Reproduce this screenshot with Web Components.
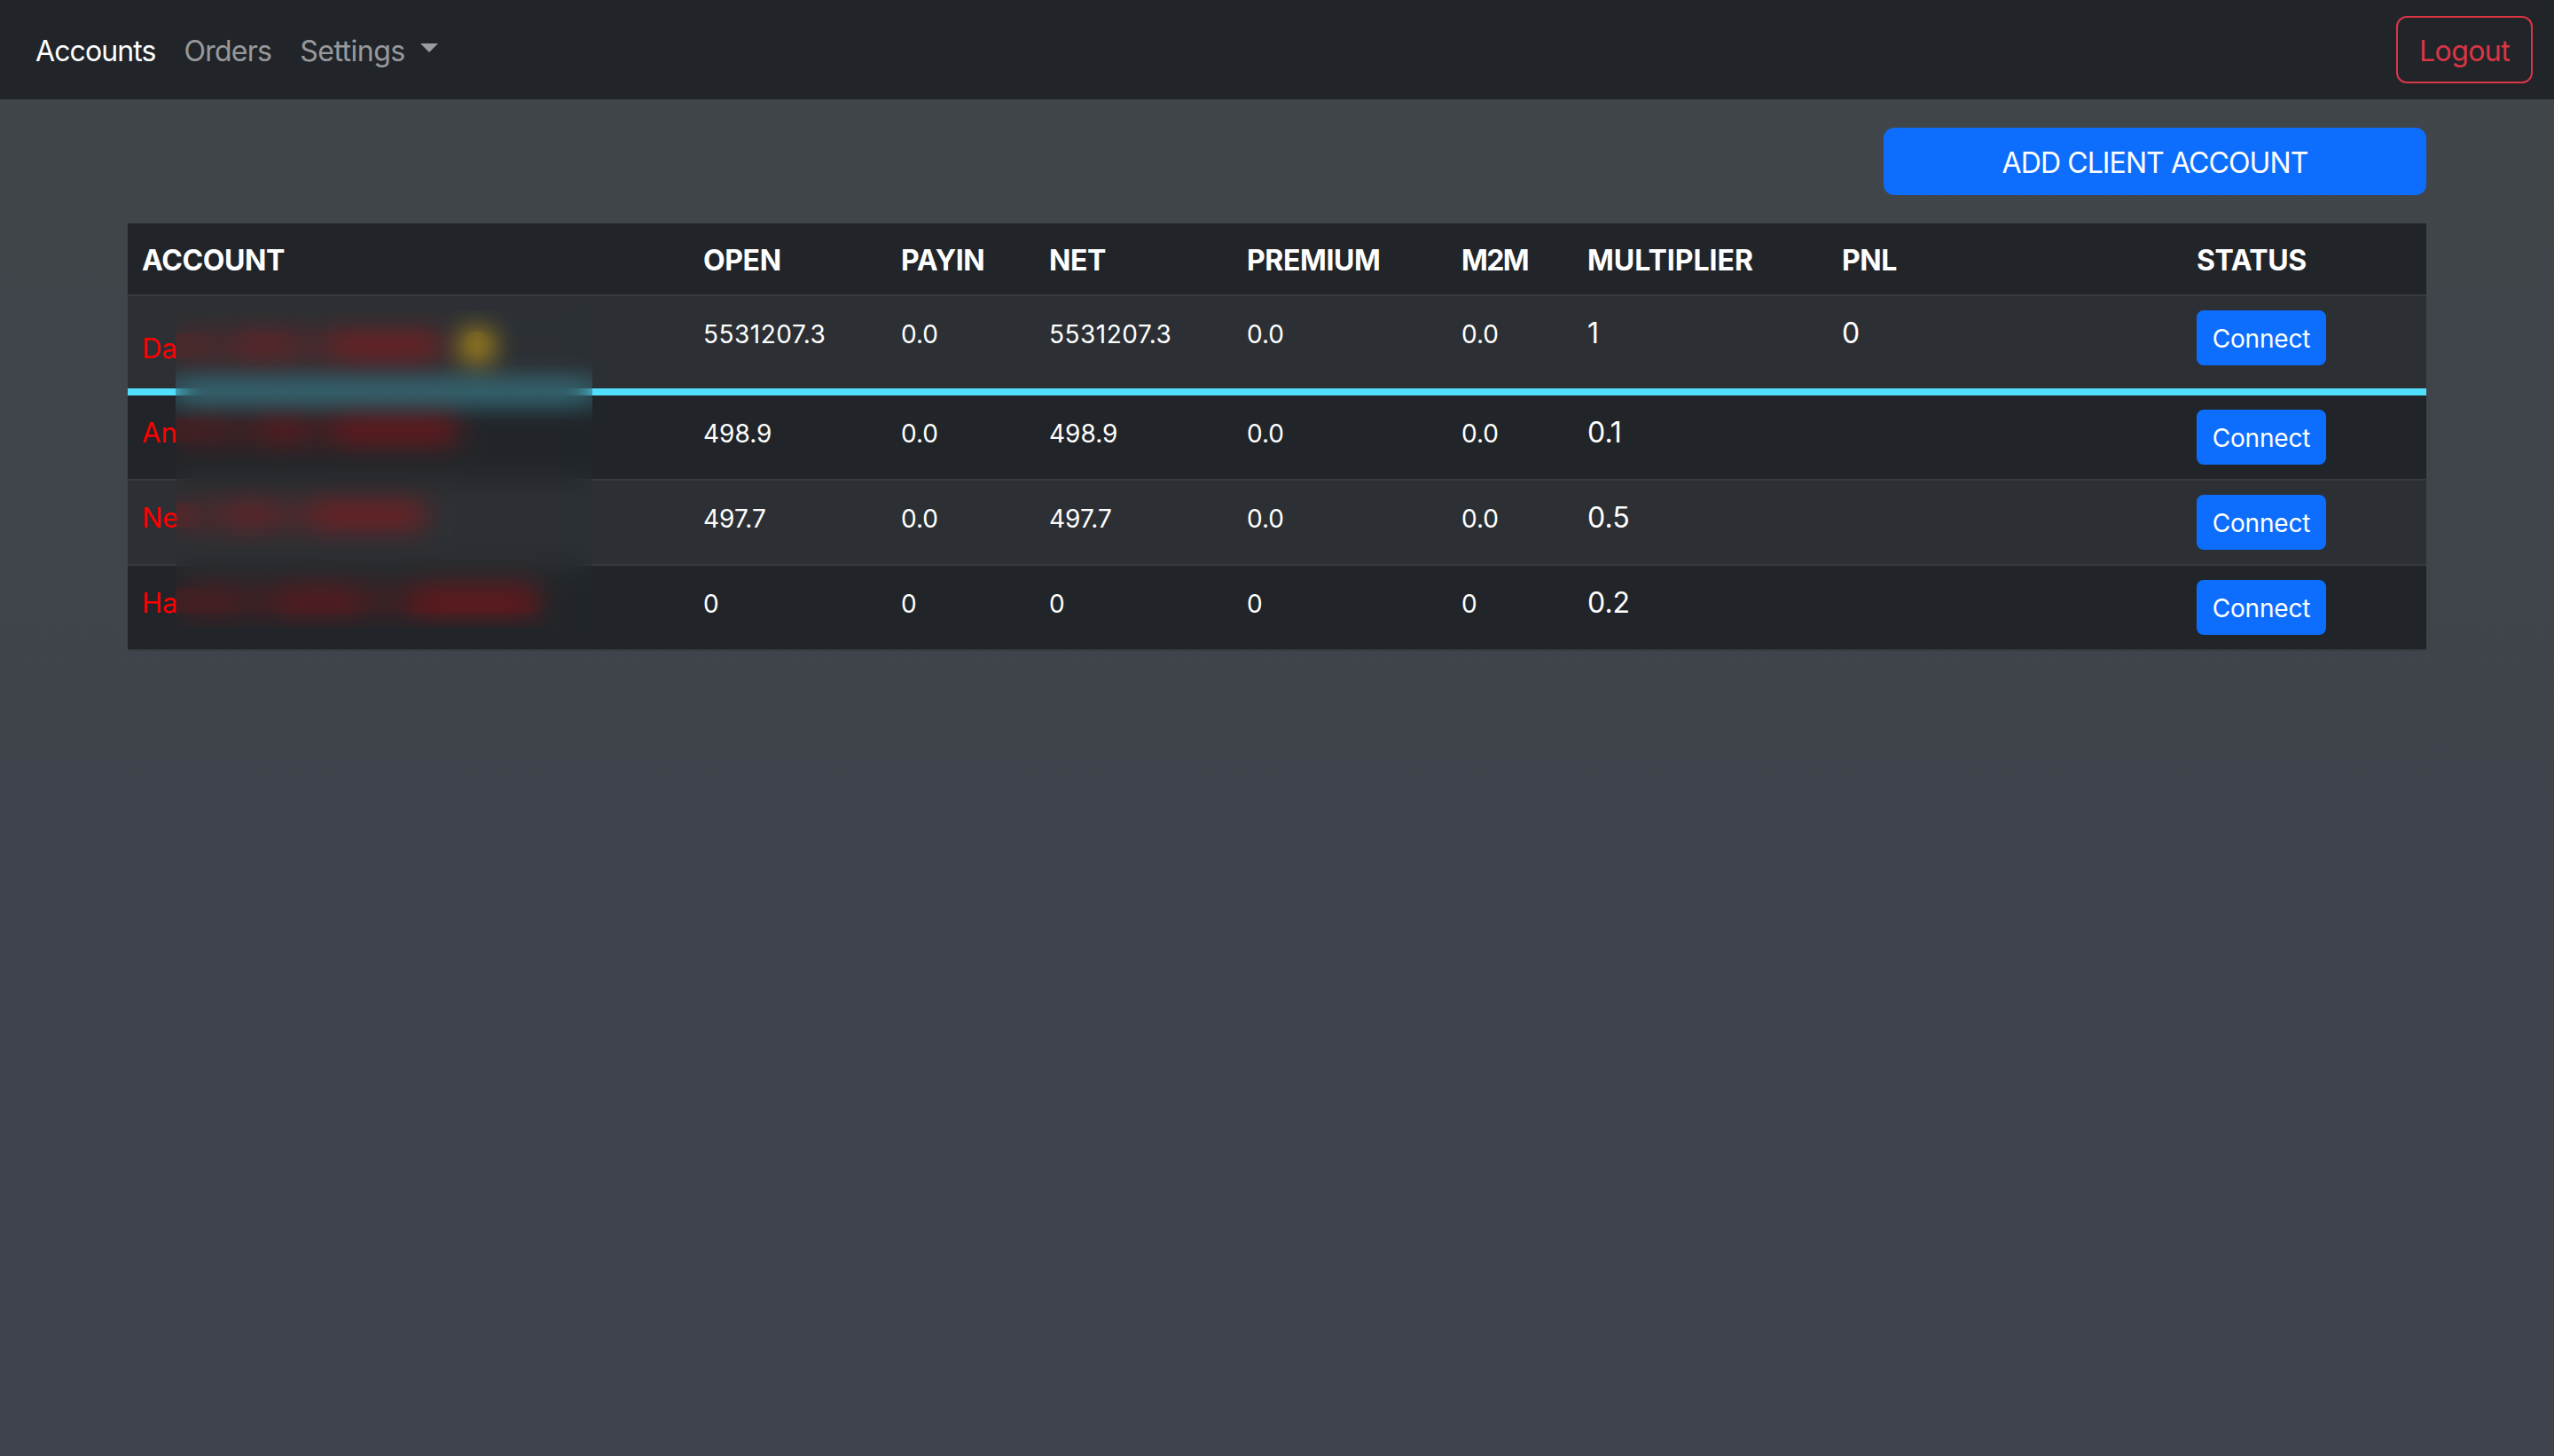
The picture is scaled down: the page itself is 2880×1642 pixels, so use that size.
<!DOCTYPE html>
<html lang="en">
<head>
<meta charset="utf-8">
<title>Accounts</title>
<style>
  html, body { margin: 0; padding: 0; }
  body {
    min-height: 100vh;
    background: linear-gradient(180deg, #41464a 0, #3f434b 900px);
    color: #fff;
    font: 400 32px/48px Inter, "Liberation Sans", sans-serif;
  }
</style>
</head>
<body>
<app-navbar>
  <nav-link active style="letter-spacing:-.9px">Accounts</nav-link>
  <nav-link>Orders</nav-link>
  <nav-link caret style="letter-spacing:-.5px">Settings</nav-link>
  <app-button slot="end" variant="outline-danger">Logout</app-button>
</app-navbar>

<accounts-page>
  <app-button slot="actions" variant="primary" wide>ADD CLIENT ACCOUNT</app-button>
  <accounts-table>
    <table-row header>
      <table-cell>ACCOUNT</table-cell>
      <table-cell>OPEN</table-cell>
      <table-cell>PAYIN</table-cell>
      <table-cell>NET</table-cell>
      <table-cell>PREMIUM</table-cell>
      <table-cell style="letter-spacing:-1.6px">M2M</table-cell>
      <table-cell style="letter-spacing:0">MULTIPLIER</table-cell>
      <table-cell>PNL</table-cell>
      <table-cell>STATUS</table-cell>
    </table-row>
    <table-row striped accent>
      <table-cell><account-name bars="212-235,268-332,373-497" dot lowered>Da</account-name></table-cell>
      <table-cell small style="letter-spacing:.5px">5531207.3</table-cell>
      <table-cell small>0.0</table-cell>
      <table-cell small style="letter-spacing:.5px">5531207.3</table-cell>
      <table-cell small>0.0</table-cell>
      <table-cell small>0.0</table-cell>
      <table-cell>1</table-cell>
      <table-cell>0</table-cell>
      <table-cell flush><app-button variant="primary" size="sm">Connect</app-button></table-cell>
    </table-row>
    <table-row>
      <table-cell><account-name bars="212-250,295-345,378-515">An</account-name></table-cell>
      <table-cell small>498.9</table-cell>
      <table-cell small>0.0</table-cell>
      <table-cell small>498.9</table-cell>
      <table-cell small>0.0</table-cell>
      <table-cell small>0.0</table-cell>
      <table-cell>0.1</table-cell>
      <table-cell></table-cell>
      <table-cell flush><app-button variant="primary" size="sm">Connect</app-button></table-cell>
    </table-row>
    <table-row striped>
      <table-cell><account-name bars="203-222,254-314,350-479">Ne</account-name></table-cell>
      <table-cell small>497.7</table-cell>
      <table-cell small>0.0</table-cell>
      <table-cell small>497.7</table-cell>
      <table-cell small>0.0</table-cell>
      <table-cell small>0.0</table-cell>
      <table-cell>0.5</table-cell>
      <table-cell></table-cell>
      <table-cell flush><app-button variant="primary" size="sm">Connect</app-button></table-cell>
    </table-row>
    <table-row>
      <table-cell><account-name bars="212-268,314-405,465-607">Ha</account-name></table-cell>
      <table-cell small>0</table-cell>
      <table-cell small>0</table-cell>
      <table-cell small>0</table-cell>
      <table-cell small>0</table-cell>
      <table-cell small>0</table-cell>
      <table-cell>0.2</table-cell>
      <table-cell></table-cell>
      <table-cell flush><app-button variant="primary" size="sm">Connect</app-button></table-cell>
    </table-row>
  </accounts-table>
</accounts-page>

<script>
// Small helper: every element here just stamps some markup in an open shadow root.
class Base extends HTMLElement {
  constructor(html) {
    super();
    this.attachShadow({ mode: 'open' });
    this.shadowRoot.innerHTML = html;
  }
}

class AppNavbar extends Base {
  constructor() {
    super(`
      <style>
        :host { display: flex; align-items: center; justify-content: space-between;
                height: 112px; padding: 0 24px; box-sizing: border-box; background: #212529; }
        .links { display: flex; }
      </style>
      <div class="links"><slot></slot></div>
      <slot name="end"></slot>`);
  }
}

class NavLink extends Base {
  constructor() {
    super(`
      <style>
        :host { display: flex; align-items: center; padding: 10px 16px 6px; color: rgba(255,255,255,.55);
                letter-spacing: -.75px; }
        :host([active]) { color: #fff; }
        .caret { display: none; margin-left: 17px; margin-bottom: 8px; width: 0; height: 0;
                 border-top: 10px solid currentColor; border-left: 10px solid transparent;
                 border-right: 10px solid transparent; }
        :host([caret]) .caret { display: block; }
      </style>
      <slot></slot><span class="caret"></span>`);
  }
}

class AppButton extends Base {
  constructor() {
    super(`
      <style>
        :host { display: inline-flex; align-items: center; justify-content: center; box-sizing: border-box;
                height: 76px; padding: 3px 24px 0; border: 2px solid transparent; border-radius: 12px;
                white-space: nowrap; }
        :host([variant="primary"]) { background: #0d6efd; border-color: #0d6efd; color: #fff; }
        :host([variant="outline-danger"]) { color: #dc3545; border-color: #dc3545; letter-spacing: -.6px; }
        :host([size="sm"]) { height: 62px; width: 146px; padding: 1px 0 0; font-size: 28px; line-height: 42px;
                             border-radius: 8px; letter-spacing: -.2px; }
        :host([wide]) { width: 612px; letter-spacing: -.9px; }
      </style>
      <slot></slot>`);
  }
}

class AccountsPage extends Base {
  constructor() {
    super(`
      <style>
        :host { display: block; width: 2592px; margin: 0 auto; padding-top: 32px; }
        .actions { display: flex; justify-content: flex-end; margin-bottom: 32px; }
      </style>
      <div class="actions"><slot name="actions"></slot></div>
      <slot></slot>`);
  }
}

// The account names are redacted in the source picture, so a blur panel lies over that column.
// The panel is drawn 60px bigger on each side and clipped back, which keeps the
// backdrop blur even right up to its hard edges. The glow tops up the smeared cyan line.
class AccountsTable extends Base {
  constructor() {
    super(`
      <style>
        :host { display: block; position: relative; background: #212529; }
        .blur { position: absolute; left: -6px; top: 38px; width: 590px; height: 478px;
                backdrop-filter: blur(16px); clip-path: inset(60px); }
        .glow { margin-top: 120px; height: 66px;
                background: linear-gradient(180deg, rgba(80,223,253,0), rgba(80,223,253,.1) 50%, rgba(80,223,253,0)); }
      </style>
      <slot></slot>
      <div class="blur"><div class="glow"></div></div>`);
  }
}

class TableRow extends Base {
  constructor() {
    super(`
      <style>
        :host { display: grid; grid-template-columns: 633px 223px 167px 223px 242px 142px 287px 400px 275px;
                background: #212529; border-bottom: 2px solid #373b3e; }
        :host([striped]) { background: #2c3034; }
        :host([accent]) { border-bottom: 8px solid #50dffd; }
        :host([header]) { font-weight: 700; letter-spacing: -.4px; }
      </style>
      <slot></slot>`);
  }
}

class TableCell extends Base {
  constructor() {
    super(`
      <style>
        :host { display: block; padding: 18px 16px 14px; min-width: 0; white-space: nowrap; }
        :host([flush]) { padding: 16px; }
        :host([small]) .txt { font-size: 28px; }
      </style>
      <span class="txt"><slot></slot></span>`);
  }
}

// Name label plus the smudges of red text that end up under the blur panel.
class AccountName extends Base {
  constructor() {
    super(`
      <style>
        :host { display: flex; align-items: baseline; color: #f00; font-size: 31px; }
        :host([lowered]) { padding: 17px 0 7px; }
        .label { flex: none; width: 38px; white-space: nowrap; }
        .bar { flex: none; height: 28px; }
        .dot { flex: none; align-self: center; width: 32px; height: 32px; border-radius: 50%;
               background: #ffc107; margin: 0 0 6px 25px; }
      </style>
      <span class="label"><slot></slot></span>`);
  }

  addBar(width, alpha) {
    const bar = document.createElement('span');
    bar.className = 'bar';
    bar.style.width = width + 'px';
    bar.style.background = `rgba(255,0,0,${alpha})`;
    this.shadowRoot.appendChild(bar);
  }

  connectedCallback() {
    let x = 198; // the label box ends here
    const alphas = [0.24, 0.3, 0.38];
    (this.getAttribute('bars') || '').split(',').forEach((part, i) => {
      const [from, to] = part.split('-').map(Number);
      this.addBar(from - x, 0.16);
      this.addBar(to - from, alphas[i]);
      x = to;
    });
    if (this.hasAttribute('dot')) {
      const dot = document.createElement('span');
      dot.className = 'dot';
      this.shadowRoot.appendChild(dot);
    }
  }
}

customElements.define('app-navbar', AppNavbar);
customElements.define('nav-link', NavLink);
customElements.define('app-button', AppButton);
customElements.define('accounts-page', AccountsPage);
customElements.define('accounts-table', AccountsTable);
customElements.define('table-row', TableRow);
customElements.define('table-cell', TableCell);
customElements.define('account-name', AccountName);
</script>
</body>
</html>
